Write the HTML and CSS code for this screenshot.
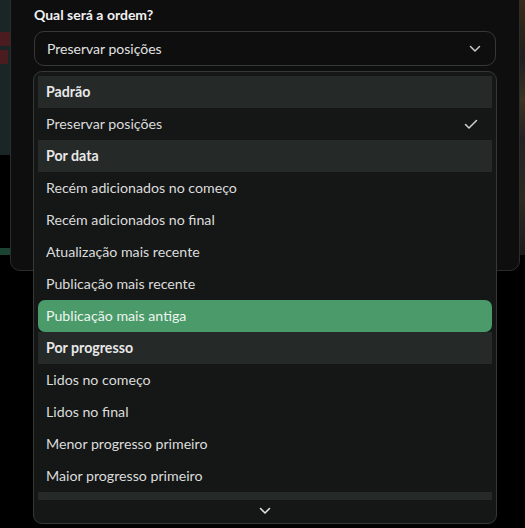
FILE: index.html
```html
<!DOCTYPE html>
<html lang="pt">
<head>
<meta charset="utf-8">
<link rel="stylesheet" href="styles.css">
</head>
<body>
<div class="backdrop-left">
  <div class="thumb"><div class="mark m1"></div><div class="mark m2"></div></div>
  <div class="gap"></div>
  <div class="strip"></div>
</div>
<div class="backdrop-right"></div>
<div class="dialog">
  <div class="label">Qual será a ordem?</div>
  <div class="select">
    <span>Preservar posições</span>
    <svg class="chev" width="12" height="8" viewBox="0 0 12 8"><path d="M1.5 1.5 L6 6 L10.5 1.5" fill="none" stroke="#c8c8c8" stroke-width="1.5" stroke-linecap="round" stroke-linejoin="round"/></svg>
  </div>
</div>
<div class="menu">
  <div class="group">Padrão</div>
  <div class="item">Preservar posições
    <svg class="check" width="14" height="11" viewBox="0 0 14 11"><path d="M1.5 5.5 L5 9 L12.5 1.5" fill="none" stroke="#d0d0d0" stroke-width="1.5" stroke-linecap="round" stroke-linejoin="round"/></svg>
  </div>
  <div class="group">Por data</div>
  <div class="item">Recém adicionados no começo</div>
  <div class="item">Recém adicionados no final</div>
  <div class="item">Atualização mais recente</div>
  <div class="item">Publicação mais recente</div>
  <div class="item active">Publicação mais antiga</div>
  <div class="group">Por progresso</div>
  <div class="item">Lidos no começo</div>
  <div class="item">Lidos no final</div>
  <div class="item">Menor progresso primeiro</div>
  <div class="item">Maior progresso primeiro</div>
  <div class="group cut"></div>
  <div class="scroll">
    <svg width="12" height="8" viewBox="0 0 12 8"><path d="M1.5 1.5 L6 6 L10.5 1.5" fill="none" stroke="#e0e0e0" stroke-width="1.6" stroke-linecap="round" stroke-linejoin="round"/></svg>
  </div>
</div>
</body>
</html>
```
FILE: styles.css
```css
html, body {
  margin: 0;
  padding: 0;
  height: 100%;
  overflow: hidden;
}
body {
  background: #000;
  font-family: Lato, "Noto Sans", sans-serif;
  font-size: 14px;
  color: #e4e4e4;
  position: relative;
}
.backdrop-left {
  position: absolute;
  left: 0;
  top: 0;
  width: 10px;
  height: 528px;
  display: flex;
  flex-direction: column;
}
.thumb {
  height: 155px;
  background: #1a2626;
  overflow: hidden;
  display: flex;
  flex-direction: column;
  gap: 4px;
  padding-top: 32px;
  box-sizing: border-box;
}
.mark {
  width: 10px;
  height: 14px;
  background: #4a1c20;
}
.m2 { width: 8px; }
.gap { height: 93px; }
.strip { height: 7px; background: #1b4433; }
.backdrop-right {
  position: absolute;
  right: 0;
  top: 0;
  width: 5px;
  height: 255px;
  background: linear-gradient(#3a2a1c 0, #2a2418 30px, #1f1f1f 60px, #3b3323 100px, #222 140px, #2a2a22 200px, #1a1a1a 255px);
}
.dialog {
  position: absolute;
  left: 10px;
  top: -20px;
  width: 510px;
  height: 291px;
  box-sizing: border-box;
  background: #0e0e0e;
  border: 1px solid #2c2c2c;
  border-radius: 0 0 10px 10px;
  padding: 25px 23px 0 23px;
}
.label {
  font-weight: 700;
  font-size: 14px;
  line-height: 18px;
  color: #f2f2f2;
}
.select {
  margin-top: 7px;
  width: 462px;
  height: 35px;
  box-sizing: border-box;
  border: 1px solid #363838;
  border-radius: 10px;
  display: flex;
  align-items: center;
  justify-content: space-between;
  padding: 0 14px 1px 12px;
  color: #e2e2e2;
}
.chev { margin-top: 1px; }
.menu {
  position: absolute;
  left: 33px;
  top: 71px;
  width: 464px;
  height: 453px;
  box-sizing: border-box;
  background: #141716;
  border: 1px solid #343836;
  border-radius: 9px;
  padding: 4px 4px 0 4px;
  display: flex;
  flex-direction: column;
  overflow: hidden;
}
.group, .item {
  flex: none;
  height: 32px;
  display: flex;
  align-items: center;
  justify-content: space-between;
  padding: 0 14px 2px 8px;
  box-sizing: border-box;
  font-size: 14.2px;
}
.group {
  background: #252927;
  font-weight: 700;
  color: #e8e8e8;
}
.item { color: #dcdcdc; }
.item.active {
  background: #4b9a6a;
  color: #ecf5ef;
  border-radius: 7px;
}
.check { margin-top: 2px; }
.group.cut { height: 8px; padding: 0; }
.scroll {
  flex: none;
  height: 22px;
  display: flex;
  align-items: center;
  justify-content: center;
}
```
